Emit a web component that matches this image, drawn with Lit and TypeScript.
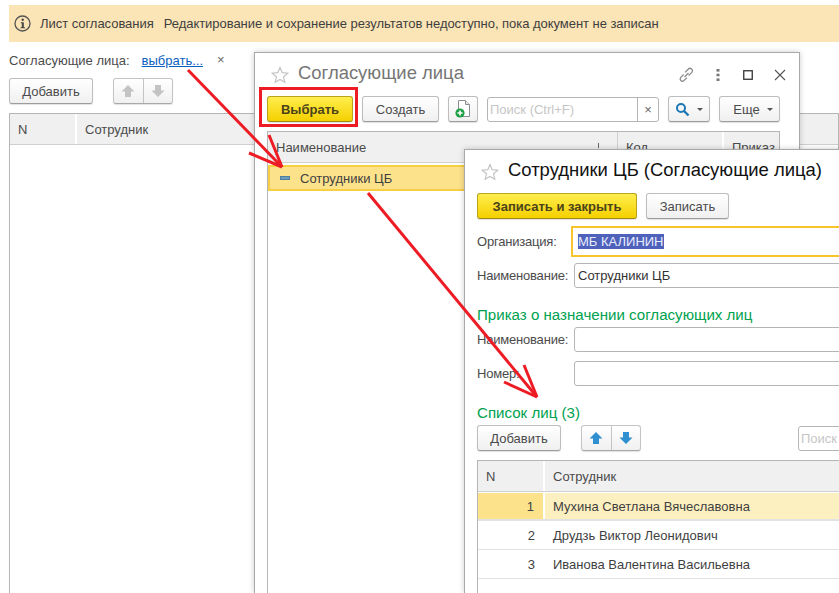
import { LitElement, html, css, svg } from "lit";
import { customElement } from "lit/decorators.js";

const star = html`<svg class="star" width="18" height="18" viewBox="0 0 18 18"><path d="M9 1.5l2.2 5.2 5.6.5-4.3 3.6 1.3 5.5L9 13.4l-4.8 2.9 1.3-5.5-4.3-3.6 5.6-.5z" fill="#fff" stroke="#c4c4c4" stroke-width="1.2"/></svg>`;

const arrowUp = (c: string) => html`<svg width="16" height="16" viewBox="0 0 16 16"><path d="M8 2l6.5 6.5H11V14H5V8.5H1.5z" fill="${c}"/></svg>`;
const arrowDown = (c: string) => html`<svg width="16" height="16" viewBox="0 0 16 16"><path d="M8 14L1.5 7.5H5V2h6v5.5h3.5z" fill="${c}"/></svg>`;

const redLine = (x1: number, y1: number, x2: number, y2: number, w = 3) =>
  svg`<line x1=${x1} y1=${y1} x2=${x2} y2=${y2} stroke="#ed1c24" stroke-width=${w}/>`;

@customElement("app-root")
export class AppRoot extends LitElement {
  static styles = css`
    :host {
      display: block;
      position: relative;
      width: 839px;
      height: 593px;
      overflow: hidden;
      background: #fff;
      font: 13px "Liberation Sans", Arial, sans-serif;
      color: #4b4b4b;
    }
    .page {
      display: flex;
      flex-direction: column;
      height: 100%;
      padding: 5px 0 0 9px;
      box-sizing: border-box;
    }
    .banner {
      display: flex;
      align-items: center;
      flex: none;
      height: 37px;
      padding-left: 5px;
      background: #fbe4b6;
      color: #3f3f3f;
      letter-spacing: -0.04px;
    }
    .banner svg { margin-right: 9px; }
    .banner .msg { margin-left: 10px; }
    .picker {
      display: flex;
      align-items: center;
      height: 16px;
      margin-top: 10px;
    }
    .picker a {
      margin-left: 12px;
      color: #0b5fc0;
      text-decoration: underline;
    }
    .picker .clear { margin-left: 14px; font-size: 13px; color: #666; position: relative; top: -1px; }
    .bar {
      display: flex;
      align-items: center;
      flex: none;
      height: 26px;
      gap: 9px;
    }
    .page > .bar { margin-top: 10px; gap: 20px; }
    .btn {
      display: flex;
      align-items: center;
      justify-content: center;
      flex: none;
      box-sizing: border-box;
      height: 26px;
      border: 1px solid #bdbdbd;
      border-bottom-color: #9c9c9c;
      border-radius: 3px;
      background: linear-gradient(#fff, #f0f0f0);
      box-shadow: 0 1px 1px rgba(0, 0, 0, 0.12);
      color: #4b4b4b;
    }
    .btn.primary {
      background: linear-gradient(#ffee4d, #f5d000);
      border-color: #b9a21c;
      border-bottom-color: #9d8a14;
      color: #4a431a;
      font-weight: bold;
    }
    .w84 { width: 84px; }
    .w86 { width: 86px; }
    .w77 { width: 77px; }
    .w30 { width: 30px; }
    .w42 { width: 42px; gap: 7px; }
    .w61 { width: 61px; gap: 7px; padding-left: 7px; }
    .w160 { width: 160px; }
    .w83 { width: 83px; }
    .caret {
      width: 0;
      height: 0;
      border: 3px solid transparent;
      border-top: 3px solid #555;
      border-bottom: 0;
    }
    .updown {
      display: flex;
      flex: none;
      box-sizing: border-box;
      width: 60px;
      height: 26px;
      border: 1px solid #c4c4c4;
      border-bottom-color: #a8a8a8;
      border-radius: 3px;
      background: linear-gradient(#fff, #f0f0f0);
      box-shadow: 0 1px 1px rgba(0, 0, 0, 0.12);
    }
    .updown span {
      display: flex;
      align-items: center;
      justify-content: center;
      flex: 1;
    }
    .updown span + span { border-left: 1px solid #c4c4c4; }
    .search {
      display: flex;
      align-items: center;
      flex: none;
      box-sizing: border-box;
      width: 172px;
      height: 25px;
      border: 1px solid #b5b5b5;
      border-radius: 3px;
      color: #c6c6c6;
      background: #fff;
    }
    .search .ph { flex: 1; padding-left: 2px; }
    .search .x {
      display: flex;
      align-items: center;
      justify-content: center;
      width: 20px;
      height: 100%;
      border-left: 1px solid #b5b5b5;
      color: #666;
    }
    .grid {
      flex: 1;
      margin-top: 9px;
      border: 1px solid #b5b5b5;
      border-bottom: 0;
      overflow: hidden;
    }
    .head {
      display: flex;
      height: 30px;
      background: #f0f0f0;
      border-bottom: 1px solid #d0d0d0;
    }
    .head > div {
      display: flex;
      align-items: center;
      box-sizing: border-box;
      flex: none;
      padding-left: 8px;
      border-right: 2px solid #fff;
    }
    .head > div:last-child { border-right: 0; }
    .c-n { width: 67px; }
    .win {
      position: absolute;
      box-sizing: border-box;
      display: flex;
      flex-direction: column;
      background: #fff;
      border: 1px solid #a9a9a9;
      border-bottom: 0;
      box-shadow: 0 0 6px rgba(0, 0, 0, 0.2);
    }
    .win-list {
      left: 254px;
      top: 52px;
      width: 546px;
      height: 541px;
      padding: 0 19px 0 12px;
    }
    .win-item {
      left: 464px;
      top: 149px;
      width: 420px;
      height: 444px;
      padding: 0 0 0 12px;
    }
    .title {
      display: flex;
      align-items: center;
      flex: none;
      height: 43px;
      gap: 9px;
      font-size: 18.45px;
    }
    .title .star { margin-left: 4px; }
    .title .caption { margin-top: -3px; }
    .win-list .title { color: #767676; }
    .win-item .title { color: #111; gap: 9px; }
    .tools {
      display: flex;
      align-items: center;
      gap: 21px;
      margin-left: auto;
      margin-right: -6px;
    }
    .tools .dots { margin-right: 2px; }
    .tree .head .name { width: 349px; position: relative; border-right: 0; }
    .tree .name::after {
      content: "";
      position: absolute;
      right: 18px;
      top: 11px;
      height: 5px;
      border-left: 1px solid #666;
    }
    .tree .kod { width: 107px; border-left: 1px solid #d0d0d0; }
    .tree .ord { flex: 1; }
    .tree .sel {
      display: flex;
      align-items: center;
      gap: 10px;
      box-sizing: border-box;
      height: 26px;
      margin-top: 2px;
      padding-left: 10px;
      background: #fde28c;
      border: 2px solid #f7cf45;
      color: #3f3f3f;
    }
    .tree .dash {
      width: 10px;
      height: 4px;
      background: #6f9db8;
      border: 1px solid #4d7f9e;
      box-sizing: border-box;
    }
    .form-row {
      display: flex;
      align-items: center;
      flex: none;
      height: 25px;
    }
    .form-row label { width: 97px; flex: none; white-space: nowrap; letter-spacing: -0.2px; }
    .field {
      flex: 1;
      box-sizing: border-box;
      height: 25px;
      display: flex;
      align-items: center;
      padding-left: 3px;
      border: 1px solid #b5b5b5;
      border-radius: 3px;
      color: #333;
    }
    .field.focus {
      height: 31px;
      margin-left: -3px;
      padding-left: 5px;
      border: 2px solid #f7c52b;
      border-radius: 0;
      margin-right: -3px;
    }
    .mark { background: #4f62bb; color: #e8ecff; }
    .r-org { margin-top: 7px; height: 31px; }
    .r-name { margin-top: 6px; }
    .group {
      flex: none;
      height: 17px;
      line-height: 17px;
      font-size: 15.1px;
      color: #00a24f;
    }
    .g1 { margin-top: 18px; }
    .r-ord { margin-top: 4px; }
    .r-num { margin-top: 9px; }
    .g2 { margin-top: 18px; }
    .list-bar { margin-top: 4px; }
    .list-bar.bar { gap: 20px; }
    .list-bar .search { width: 80px; margin-left: 137px; }
    .list-grid { margin-top: 9px; }
    .row {
      display: flex;
      box-sizing: border-box;
      height: 29px;
      border-bottom: 1px solid #e2e2e2;
      color: #3f3f3f;
    }
    .row > div {
      display: flex;
      align-items: center;
      box-sizing: border-box;
    }
    .row .num { width: 67px; justify-content: flex-end; padding-right: 9px; border-right: 1px solid transparent; }
    .row .fio { flex: 1; padding-left: 8px; }
    .row.cur { height: 28px; margin-top: 1px; border-bottom-width: 2px; }
    .row.cur .num { background: #fde28c; border-right: 2px solid #fff; }
    .row.cur .fio { background: #fdf0c0; }
    .overlay {
      position: absolute;
      left: 0;
      top: 0;
      pointer-events: none;
    }
  `;

  render() {
    return html`
      <div class="page">
        <div class="banner">
          <svg width="17" height="17" viewBox="0 0 17 17">
            <circle cx="8.5" cy="8.5" r="7.5" fill="none" stroke="#555" stroke-width="1.3"/>
            <circle cx="8.7" cy="4.8" r="1.2" fill="#444"/>
            <path d="M6.8 7.2h3v5h1.2v1H6.6v-1h1.2V8.2h-1z" fill="#444"/>
          </svg>
          <span>Лист согласования</span><span class="msg">Редактирование и сохранение результатов недоступно, пока документ не записан</span>
        </div>
        <div class="picker">
          <span>Согласующие лица:</span><a>выбрать...</a><span class="clear">×</span>
        </div>
        <div class="bar">
          <div class="btn w84">Добавить</div>
          <div class="updown">
            <span>${arrowUp("#c3c3c3")}</span><span>${arrowDown("#c3c3c3")}</span>
          </div>
        </div>
        <div class="grid">
          <div class="head">
            <div class="c-n">N</div>
            <div>Сотрудник</div>
          </div>
        </div>
      </div>

      <section class="win win-list">
        <div class="title">
          ${star}<span class="caption">Согласующие лица</span>
          <div class="tools">
            <svg width="18" height="18" viewBox="0 0 18 18" fill="none" stroke="#8a8a8a" stroke-width="1.3">
              <path d="M7.5 11l4-4M6.8 8.4L3.6 11.6a2.3 2.3 0 0 0 3.2 3.2L10 11.6M8 6.4l3.2-3.2a2.3 2.3 0 0 1 3.6 3.2L11.6 9.6"/>
            </svg>
            <svg class="dots" width="4" height="12" viewBox="0 0 4 12"><g fill="#777"><rect x="0.5" width="3" height="2.6"/><rect x="0.5" y="4.7" width="3" height="2.6"/><rect x="0.5" y="9.4" width="3" height="2.6"/></g></svg>
            <svg width="10" height="10" viewBox="0 0 10 10"><rect x="0.75" y="0.75" width="8.5" height="8.5" fill="none" stroke="#333" stroke-width="1.3"/></svg>
            <svg width="12" height="12" viewBox="0 0 12 12"><path d="M1 1l10 10M11 1L1 11" stroke="#555" stroke-width="1.1"/></svg>
          </div>
        </div>
        <div class="bar">
          <div class="btn primary w86">Выбрать</div>
          <div class="btn w77">Создать</div>
          <div class="btn w30">
            <svg width="18" height="20" viewBox="0 0 18 20">
              <path d="M4.5 1.5h7l4 4v12h-11z" fill="#fff" stroke="#8a8f96"/>
              <path d="M11.5 1.5v4h4" fill="#e8e8e8" stroke="#8a8f96"/>
              <circle cx="6" cy="14" r="4.6" fill="#1e9e45"/>
              <path d="M6 11.4v5.2M3.4 14h5.2" stroke="#fff" stroke-width="1.6"/>
            </svg>
          </div>
          <div class="search">
            <span class="ph">Поиск (Ctrl+F)</span><span class="x">×</span>
          </div>
          <div class="btn w42">
            <svg width="15" height="15" viewBox="0 0 15 15" fill="none" stroke="#1c78b4">
              <circle cx="6" cy="6" r="4" stroke-width="2"/>
              <path d="M9 9l4.5 4.5" stroke-width="2.4"/>
            </svg>
            <span class="caret"></span>
          </div>
          <div class="btn w61">Еще<span class="caret"></span></div>
        </div>
        <div class="grid tree">
          <div class="head">
            <div class="name">Наименование</div>
            <div class="kod">Код</div>
            <div class="ord">Приказ</div>
          </div>
          <div class="sel"><span class="dash"></span><span>Сотрудники ЦБ</span></div>
        </div>
      </section>

      <section class="win win-item">
        <div class="title">${star}<span class="caption">Сотрудники ЦБ (Согласующие лица)</span></div>
        <div class="bar">
          <div class="btn primary w160">Записать и закрыть</div>
          <div class="btn w83">Записать</div>
        </div>
        <div class="form-row r-org">
          <label>Организация:</label>
          <div class="field focus"><span class="mark">МБ КАЛИНИН</span></div>
        </div>
        <div class="form-row r-name">
          <label>Наименование:</label>
          <div class="field">Сотрудники ЦБ</div>
        </div>
        <div class="group g1">Приказ о назначении согласующих лиц</div>
        <div class="form-row r-ord">
          <label>Наименование:</label>
          <div class="field"></div>
        </div>
        <div class="form-row r-num">
          <label>Номер:</label>
          <div class="field"></div>
        </div>
        <div class="group g2">Список лиц (3)</div>
        <div class="bar list-bar">
          <div class="btn w84">Добавить</div>
          <div class="updown">
            <span>${arrowUp("#2f8fd0")}</span><span>${arrowDown("#2f8fd0")}</span>
          </div>
          <div class="search"><span class="ph">Поиск</span></div>
        </div>
        <div class="grid list-grid">
          <div class="head">
            <div class="c-n">N</div>
            <div>Сотрудник</div>
          </div>
          <div class="row cur"><div class="num">1</div><div class="fio">Мухина Светлана Вячеславовна</div></div>
          <div class="row"><div class="num">2</div><div class="fio">Друдзь Виктор Леонидович</div></div>
          <div class="row"><div class="num">3</div><div class="fio">Иванова Валентина Васильевна</div></div>
        </div>
      </section>

      <svg class="overlay" width="839" height="593" viewBox="0 0 839 593" fill="none">
        <rect x="260.5" y="88.5" width="96" height="37" stroke="#ed1c24" stroke-width="3"/>
        ${redLine(188, 70, 282, 167)}
        ${redLine(249, 153, 282, 167)}
        ${redLine(269, 135, 282, 167)}
        ${redLine(368, 193, 537, 397)}
        ${redLine(524, 365, 537, 397)}
        ${redLine(504, 382, 537, 397)}
      </svg>
    `;
  }
}
